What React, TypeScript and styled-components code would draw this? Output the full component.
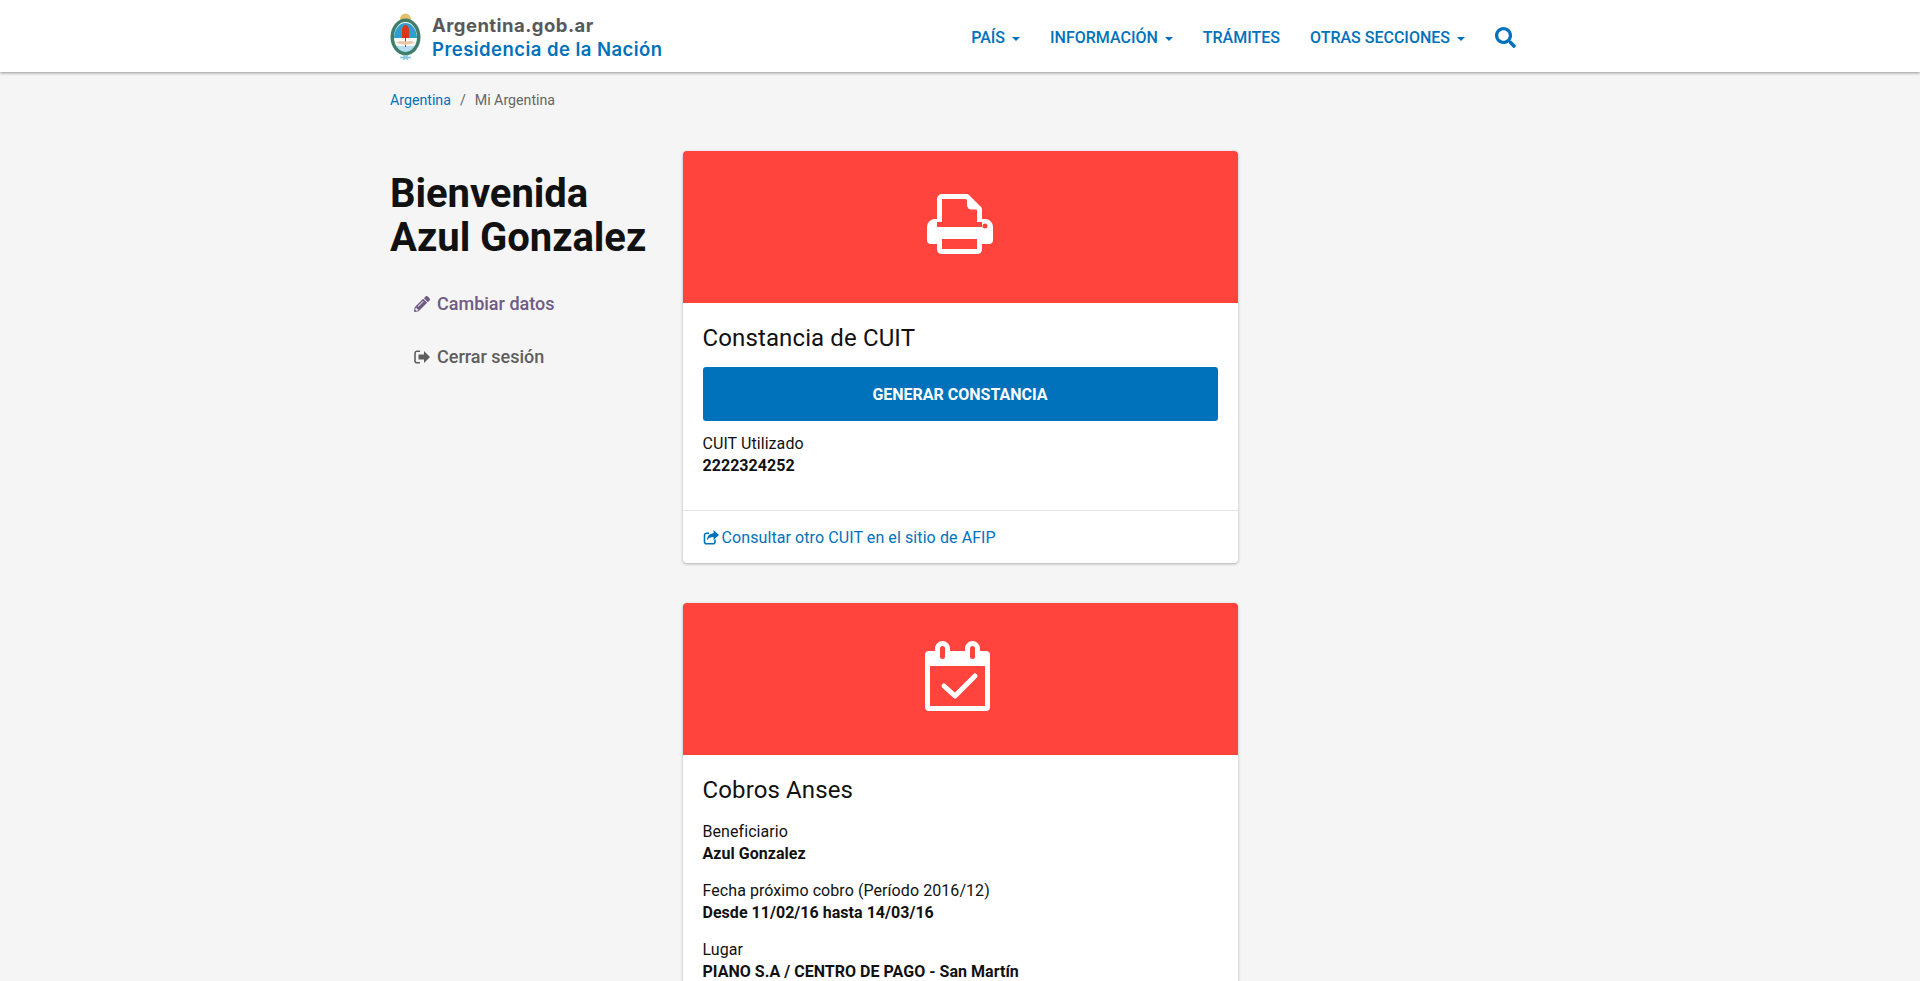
import React from "react";
import styled, { createGlobalStyle } from "styled-components";
import { FaPencilAlt, FaSearch } from "react-icons/fa";

const Global = createGlobalStyle`
  html, body { margin: 0; padding: 0; height: 981px; overflow: hidden; background: #f5f5f5; }
  body { font-family: Roboto, "Liberation Sans", sans-serif; font-size: 16px; line-height: 22px; color: #111; }
  * { box-sizing: border-box; }
  a { text-decoration: none; color: inherit; }
`;

const Page = styled.div`
  height: 981px;
  overflow: hidden;
`;
const Header = styled.header`
  height: 72px;
  background: #fff;
  box-shadow: 0 1px 3px rgba(0, 0, 0, 0.4);
`;
const Container = styled.div`
  width: 1140px;
  margin: 0 auto;
`;
const HeaderInner = styled(Container)`
  height: 72px;
  display: flex;
  align-items: center;
  justify-content: space-between;
`;
const Brand = styled.a`
  display: flex;
  align-items: center;
  gap: 11px;
`;
const Wordmark = styled.div`
  display: flex;
  flex-direction: column;
  padding-top: 2px;
  font-family: Inter, sans-serif;
  font-weight: 600;
  font-size: 18.5px;
  line-height: 24px;
  letter-spacing: 0.45px;
`;
const WordTop = styled.span`
  color: #58595b;
  font-weight: 700;
`;
const WordBottom = styled.span`
  color: #0072bb;
`;
const Nav = styled.nav`
  display: flex;
  align-items: center;
  gap: 30px;
  margin-right: 14px;
  margin-top: 3px;
`;
const NavItem = styled.a`
  display: flex;
  align-items: center;
  gap: 7px;
  color: #0072bb;
  font-size: 16px;
  font-weight: 500;
  text-transform: uppercase;
`;
const Caret = styled.span`
  width: 0;
  height: 0;
  margin-top: 2px;
  border-left: 4px solid transparent;
  border-right: 4px solid transparent;
  border-top: 4px solid #0072bb;
`;
const SearchLink = styled.a`
  display: flex;
  color: #0072bb;
  font-size: 21px;
`;
const Breadcrumb = styled.div`
  padding-top: 18px;
  height: 79px;
  display: flex;
  gap: 9px;
  font-size: 14.2px;
  line-height: 20px;
  color: #666;
`;
const Crumb = styled.a`
  color: #0072bb;
`;
const Main = styled(Container)`
  display: grid;
  grid-template-columns: 277.5px 555px;
  column-gap: 15px;
`;
const Sidebar = styled.aside`
  padding-top: 21px;
`;
const Title = styled.h1`
  margin: 0 0 17px;
  font-size: 40px;
  line-height: 44px;
  font-weight: 700;
  letter-spacing: -0.06px;
  color: #111;
`;
const SideLink = styled.a<{ $color: string }>`
  display: flex;
  align-items: center;
  gap: 7px;
  height: 53px;
  padding-left: 24px;
  font-size: 18px;
  font-weight: 500;
  color: ${(p) => p.$color};
  svg {
    flex: none;
  }
`;
const Cards = styled.div`
  display: flex;
  flex-direction: column;
  gap: 40px;
`;
const Card = styled.section`
  background: #fff;
  border-radius: 4px;
  box-shadow: 0 1px 3px rgba(0, 0, 0, 0.3);
  overflow: hidden;
`;
const CardHero = styled.div`
  height: 152px;
  padding-bottom: 6px;
  background: #ff433d;
  display: flex;
  align-items: center;
  justify-content: center;
`;
const CardBody = styled.div`
  padding: 19px 20px 18px;
  letter-spacing: 0.07px;
`;
const CardTitle = styled.h3`
  margin: 0 0 15px;
  font-size: 24px;
  line-height: 32px;
  font-weight: 400;
  letter-spacing: 0.12px;
  color: #111;
`;
const Primary = styled.a`
  display: flex;
  align-items: center;
  justify-content: center;
  height: 54px;
  padding-top: 2px;
  margin: -2px 0 12px;
  border-radius: 3px;
  background: #0072bb;
  color: #fff;
  font-size: 16px;
  font-weight: 700;
  letter-spacing: 0;
  text-transform: uppercase;
`;
const Field = styled.div`
  margin-bottom: 15px;
`;
const Label = styled.div`
  color: #111;
`;
const Value = styled.div`
  font-weight: 700;
  letter-spacing: 0.03px;
  color: #111;
`;
const CardFooter = styled.div`
  height: 53px;
  border-top: 1px solid #e5e5e5;
  padding: 1px 20px 0;
  display: flex;
  align-items: center;
  gap: 3px;
  letter-spacing: 0.09px;
  color: #0072bb;
  svg {
    flex: none;
  }
`;
const CalendarSvg = styled.svg`
  margin-right: 6px;
`;

const Shield = () => (
  <svg width="31" height="47" viewBox="0 0 31 47">
    <circle cx="15.5" cy="6" r="5.5" fill="#e3c16f" />
    <ellipse cx="15.5" cy="24" rx="15" ry="18.5" fill="#3f7f6a" />
    <ellipse cx="15.5" cy="24" rx="11.5" ry="15" fill="#fff" />
    <path d="M4 25a11.5 15 0 0 1 23 0z" fill="#2f9fd0" />
    <path d="M6 33a11.5 15 0 0 0 19 0z" fill="#2f9fd0" opacity="0.35" />
    <path d="M12 25v-8c0-3 1.500-5 3.500-5s3.500 2 3.500 5v8z" fill="#d9381e" />
    <path d="M15.500 22v12" stroke="#555" strokeWidth="1" />
    <path d="M6 30c3-3 6-2 9.500-1.500 3.500-.5 6.500-1.500 9.500 1.500l-9.500 2z" fill="#e8c8a8" />
    <path d="M10 44.500h11M13 42l5 5M18 42l-5 5" stroke="#7fc4e4" strokeWidth="1.300" />
  </svg>
);

const Printer = () => (
  <svg width="66" height="60" viewBox="0 0 66 60">
    <path
      d="M12.500 28V5a2.500 2.500 0 0 1 2.500-2.500H40l12.500 12.500V28M12.500 45v10.500a2 2 0 0 0 2 2h36a2 2 0 0 0 2-2V45"
      fill="none"
      stroke="#fff"
      strokeWidth="5"
      strokeLinejoin="round"
    />
    <path d="M40 3v8a4.500 4.500 0 0 0 4.500 4.500H52z" fill="#fff" />
    <path
      d="M10 25H8a8 8 0 0 0-8 8v13a4 4 0 0 0 4 4h6v-5h45v5h7a4 4 0 0 0 4-4V33a8 8 0 0 0-8-8h-3v8H10z"
      fill="#fff"
    />
    <circle cx="58" cy="32" r="2.500" fill="#ff433d" />
  </svg>
);

const Calendar = () => (
  <CalendarSvg width="65" height="70" viewBox="0 0 65 70">
    <path
      d="M4 10h6V7.500a7.500 7.500 0 0 1 15 0V10h15V7.500a7.500 7.500 0 0 1 15 0V10h6a4 4 0 0 1 4 4v52a4 4 0 0 1-4 4H4a4 4 0 0 1-4-4V14a4 4 0 0 1 4-4zM5 25v40h55V25z"
      fill="#fff"
      fillRule="evenodd"
    />
    <rect x="15" y="5" width="5" height="13" rx="2.500" fill="#ff433d" />
    <rect x="45" y="5" width="5" height="13" rx="2.500" fill="#ff433d" />
    <path d="M19 45l11 10 20-20" fill="none" stroke="#fff" strokeWidth="5" strokeLinecap="round" strokeLinejoin="round" />
  </CalendarSvg>
);

const SignOut = () => (
  <svg width="16" height="14" viewBox="0 0 16 14">
    <path d="M6 1.200H3a2 2 0 0 0-2 2v7.600a2 2 0 0 0 2 2h3" fill="none" stroke="currentColor" strokeWidth="1.600" />
    <path d="M10 1l6 6-6 6V9.500H4.500v-5H10z" fill="currentColor" />
  </svg>
);

const ShareSquare = () => (
  <svg width="16" height="15" viewBox="0 0 16 15">
    <path
      d="M6 3.200H3.500a2 2 0 0 0-2 2v6.600a2 2 0 0 0 2 2h6.500a2 2 0 0 0 2-2V9.500"
      fill="none"
      stroke="currentColor"
      strokeWidth="1.600"
    />
    <path d="M10.500 0L16 5l-5.500 5V7c-3 0-5 .5-6.500 3.500C4 6 6.500 3.800 10.500 3.300z" fill="currentColor" />
  </svg>
);

const navItems: [string, boolean][] = [
  ["País", true],
  ["Información", true],
  ["Trámites", false],
  ["Otras secciones", true],
];

export default function App() {
  return (
    <Page>
      <Global />
      <Header>
        <HeaderInner>
          <Brand>
            <Shield />
            <Wordmark>
              <WordTop>Argentina.gob.ar</WordTop>
              <WordBottom>Presidencia de la Nación</WordBottom>
            </Wordmark>
          </Brand>
          <Nav>
            {navItems.map(([label, caret]) => (
              <NavItem key={label}>
                {label}
                {caret && <Caret />}
              </NavItem>
            ))}
            <SearchLink>
              <FaSearch />
            </SearchLink>
          </Nav>
        </HeaderInner>
      </Header>
      <Container>
        <Breadcrumb>
          <Crumb>Argentina</Crumb>
          <span>/</span>
          <span>Mi Argentina</span>
        </Breadcrumb>
      </Container>
      <Main>
        <Sidebar>
          <Title>
            Bienvenida
            <br />
            Azul Gonzalez
          </Title>
          <SideLink $color="#6f5a84">
            <FaPencilAlt size={16} />
            Cambiar datos
          </SideLink>
          <SideLink $color="#5e5e5e">
            <SignOut />
            Cerrar sesión
          </SideLink>
        </Sidebar>
        <Cards>
          <Card>
            <CardHero>
              <Printer />
            </CardHero>
            <CardBody>
              <CardTitle>Constancia de CUIT</CardTitle>
              <Primary>Generar constancia</Primary>
              <Field>
                <Label>CUIT Utilizado</Label>
                <Value>2222324252</Value>
              </Field>
            </CardBody>
            <CardFooter>
              <ShareSquare />
              Consultar otro CUIT en el sitio de AFIP
            </CardFooter>
          </Card>
          <Card>
            <CardHero>
              <Calendar />
            </CardHero>
            <CardBody>
              <CardTitle>Cobros Anses</CardTitle>
              <Field>
                <Label>Beneficiario</Label>
                <Value>Azul Gonzalez</Value>
              </Field>
              <Field>
                <Label>Fecha próximo cobro (Período 2016/12)</Label>
                <Value>Desde 11/02/16 hasta 14/03/16</Value>
              </Field>
              <Field>
                <Label>Lugar</Label>
                <Value>PIANO S.A / CENTRO DE PAGO - San Martín</Value>
              </Field>
            </CardBody>
          </Card>
        </Cards>
      </Main>
    </Page>
  );
}
